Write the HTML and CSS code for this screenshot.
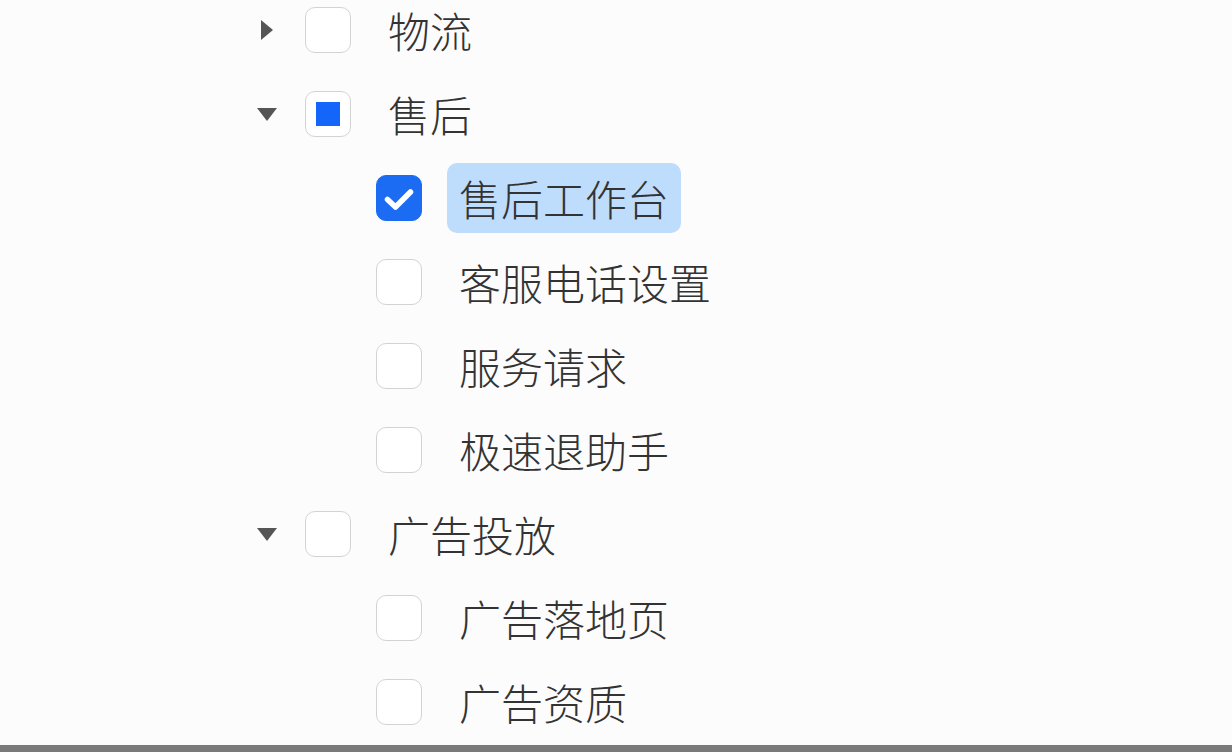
FILE: index.html
```html
<!DOCTYPE html>
<html lang="zh-CN">
<head>
<meta charset="utf-8">
<title>Tree</title>
<link rel="stylesheet" href="styles.css">
</head>
<body>
<div class="page">
  <ul class="tree">
    <li class="row lvl1">
      <span class="caret"><svg width="12" height="20" viewBox="0 0 12 20"><path d="M0 0 L12 10 L0 20 Z" fill="#555"/></svg></span>
      <span class="box"></span>
      <span class="label">物流</span>
    </li>
    <li class="row lvl1">
      <span class="caret"><svg width="20" height="13" viewBox="0 0 20 13"><path d="M0 0 L20 0 L10 13 Z" fill="#555"/></svg></span>
      <span class="box half"><span class="dot"></span></span>
      <span class="label">售后</span>
    </li>
    <li class="row lvl2">
      <span class="caret"></span>
      <span class="box on"><svg width="46" height="46" viewBox="0 0 46 46"><polyline points="11.5,24.5 19.5,32 34.5,17" fill="none" stroke="#fff" stroke-width="5.5" stroke-linecap="round" stroke-linejoin="round"/></svg></span>
      <span class="label selected">售后工作台</span>
    </li>
    <li class="row lvl2">
      <span class="caret"></span>
      <span class="box"></span>
      <span class="label">客服电话设置</span>
    </li>
    <li class="row lvl2">
      <span class="caret"></span>
      <span class="box"></span>
      <span class="label">服务请求</span>
    </li>
    <li class="row lvl2">
      <span class="caret"></span>
      <span class="box"></span>
      <span class="label">极速退助手</span>
    </li>
    <li class="row lvl1">
      <span class="caret"><svg width="20" height="13" viewBox="0 0 20 13"><path d="M0 0 L20 0 L10 13 Z" fill="#555"/></svg></span>
      <span class="box"></span>
      <span class="label">广告投放</span>
    </li>
    <li class="row lvl2">
      <span class="caret"></span>
      <span class="box"></span>
      <span class="label">广告落地页</span>
    </li>
    <li class="row lvl2">
      <span class="caret"></span>
      <span class="box"></span>
      <span class="label">广告资质</span>
    </li>
  </ul>
</div>
<div class="bar"></div>
</body>
</html>
```

FILE: styles.css
```css
html, body {
  margin: 0;
  padding: 0;
  background: #fdfcfd;
}
body {
  width: 1232px;
  height: 752px;
  overflow: hidden;
  font-family: "Noto Sans CJK SC", "Noto Sans", sans-serif;
  color: #333;
}
.page {
  height: 745px;
  overflow: hidden;
}
.tree {
  list-style: none;
  margin: -12px 0 0 0;
  padding: 0 0 0 243px;
}
.row {
  height: 84px;
  display: flex;
  align-items: center;
}
.lvl2 {
  padding-left: 71px;
}
.caret {
  width: 48px;
  height: 46px;
  margin-right: 14px;
  display: flex;
  align-items: center;
  justify-content: center;
  flex: none;
}
.caret svg { display: block; }
.box {
  width: 46px;
  height: 46px;
  box-sizing: border-box;
  border: 1.5px solid #d3d3d3;
  border-radius: 10px;
  background: #fff;
  flex: none;
  display: flex;
  align-items: center;
  justify-content: center;
  margin-right: 25px;
}
.box.on {
  background: #1b6cf2;
  border-color: #1b6cf2;
}
.box.on svg { display: block; margin: -1.5px; }
.dot {
  width: 24px;
  height: 24px;
  background: #1466fb;
}
.label {
  font-size: 42px;
  font-weight: 300;
  line-height: 70px;
  height: 70px;
  padding: 0 12px;
  border-radius: 10px;
  white-space: nowrap;
}
.label.selected {
  background: #bedcfb;
}
.bar {
  height: 7px;
  background: #7a7a7a;
}
```
